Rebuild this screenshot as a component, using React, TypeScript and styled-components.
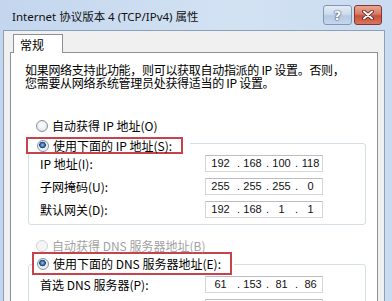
import { createGlobalStyle, styled } from "styled-components"

type Octets = [string, string, string, string]

const ipFields: { label: string; value: Octets }[] = [
  { label: "IP 地址(I):", value: ["192", "168", "100", "118"] },
  { label: "子网掩码(U):", value: ["255", "255", "255", "0"] },
  { label: "默认网关(D):", value: ["192", "168", "1", "1"] },
]

const dnsFields: { label: string; value: Octets }[] = [
  { label: "首选 DNS 服务器(P):", value: ["61", "153", "81", "86"] },
  { label: "备用 DNS 服务器(A):", value: ["", "", "", ""] },
]

const IpInput = ({ value }: { value: Octets }) => (
  <IpBox>
    {value.map((octet, i) => (
      <Octet key={i}>
        {i > 0 && <Dot>.</Dot>}
        <OctetText>{octet}</OctetText>
      </Octet>
    ))}
  </IpBox>
)

const App = () => {
  return (
    <>
      <GlobalStyle />
      <Window>
        <TitleBar>
          <Title>Internet 协议版本 4 (TCP/IPv4) 属性</Title>
          <CaptionButtons>
            <CaptionButton $variant="help">?</CaptionButton>
            <CaptionButton $variant="close">
              <svg width="12" height="10" viewBox="0 0 12 10">
                <path d="M2 1.5 L10 8.5 M10 1.5 L2 8.5" stroke="#5a1810" strokeWidth="3.6" strokeLinecap="round" />
                <path d="M2 1.5 L10 8.5 M10 1.5 L2 8.5" stroke="#fff" strokeWidth="2" strokeLinecap="round" />
              </svg>
            </CaptionButton>
          </CaptionButtons>
        </TitleBar>
        <Body>
          <TabStrip>
            <Tab>常规</Tab>
          </TabStrip>
          <Panel>
            <Description>
              如果网络支持此功能，则可以获取自动指派的 IP 设置。否则，
              <br />
              您需要从网络系统管理员处获得适当的 IP 设置。
            </Description>

            <OptionRow $disabled={false}>
              <Radio />
              <span>自动获得 IP 地址(O)</span>
            </OptionRow>

            <LegendRow $left={15} $top={3} $tail={7}>
              <Marked $height={17} $padLeft={9} $padRight={9}>
                <Radio $checked />
                <span>使用下面的 IP 地址(S):</span>
              </Marked>
            </LegendRow>
            <GroupBox>
              {ipFields.map((field) => (
                <FieldRow key={field.label}>
                  <FieldLabel>{field.label}</FieldLabel>
                  <IpInput value={field.value} />
                </FieldRow>
              ))}
            </GroupBox>

            <OptionRow $disabled>
              <Radio $disabled />
              <span>自动获得 DNS 服务器地址(B)</span>
            </OptionRow>

            <LegendRow $left={21} $top={-2} $tail={2}>
              <Marked $height={23} $padLeft={3} $padRight={9}>
                <Radio $checked />
                <span>使用下面的 DNS 服务器地址(E):</span>
              </Marked>
            </LegendRow>
            <GroupBox>
              {dnsFields.map((field) => (
                <FieldRow key={field.label}>
                  <FieldLabel>{field.label}</FieldLabel>
                  <IpInput value={field.value} />
                </FieldRow>
              ))}
            </GroupBox>
          </Panel>
        </Body>
      </Window>
    </>
  )
}

const GlobalStyle = createGlobalStyle`
  html, body {
    margin: 0;
    padding: 0;
    background: #c5d8ef;
  }
  body {
    font-family: "Noto Sans CJK SC", "Noto Sans", sans-serif;
    font-size: 12px;
    color: #000;
  }
`

const Window = styled.div`
  width: 392px;
  height: 301px;
  overflow: hidden;
  display: flex;
  flex-direction: column;
  background: linear-gradient(90deg, #c3d6ee 0%, #d3e2f3 60%, #c9dbf0 100%);
`

const TitleBar = styled.div`
  height: 30px;
  flex: none;
  display: flex;
  align-items: flex-start;
  padding: 0 10px 0 12px;
  box-sizing: border-box;
`

const Title = styled.div`
  flex: 1;
  font-family: "Noto Sans", "Noto Sans CJK SC", sans-serif;
  font-size: 11.5px;
  line-height: 16px;
  margin-top: 9px;
  color: #111;
  white-space: nowrap;
`

const CaptionButtons = styled.div`
  display: flex;
  gap: 2px;
  margin-top: 5px;
`

const CaptionButton = styled.div<{ $variant: "help" | "close" }>`
  width: ${({ $variant }) => ($variant === "help" ? "29px" : "28px")};
  height: 20px;
  box-sizing: border-box;
  border-radius: 3px;
  display: flex;
  align-items: center;
  justify-content: center;
  font-family: "DejaVu Sans", sans-serif;
  font-weight: bold;
  font-size: 13px;
  color: #fff;
  text-shadow: 0 0 2px #2b3f5c, 0 0 1px #2b3f5c;
  border: 1px solid ${({ $variant }) => ($variant === "help" ? "#7f97b8" : "#8a3327")};
  background: ${({ $variant }) =>
    $variant === "help"
      ? "linear-gradient(#e4ecf6 0%, #cddbec 45%, #b5c9e2 55%, #c6d7ec 100%)"
      : "linear-gradient(#e8a796 0%, #d77a66 45%, #c5503b 55%, #d8765f 100%)"};
`

const Body = styled.div`
  flex: 1;
  margin: 0 7px 0 3px;
  border: 1px solid #8ba0bb;
  border-bottom: none;
  background: #f0f0f0;
  padding: 3px 6px 0 6px;
  display: flex;
  flex-direction: column;
  overflow: hidden;
`

const TabStrip = styled.div`
  display: flex;
  padding-left: 3px;
`

const Tab = styled.div`
  position: relative;
  z-index: 1;
  width: 50px;
  height: 19px;
  box-sizing: border-box;
  margin-bottom: -1px;
  padding-left: 6px;
  border: 1px solid #8e8f94;
  border-bottom: none;
  background: #fff;
  line-height: 19px;
`

const Panel = styled.div`
  flex: 1;
  border: 1px solid #8e8f94;
  border-bottom: none;
  background: #fff;
  display: flex;
  flex-direction: column;
  align-items: flex-start;
`

const Description = styled.p`
  margin: 10px 0 0 14px;
  line-height: 13px;
  letter-spacing: -0.3px;
  white-space: nowrap;
`

const OptionRow = styled.div<{ $disabled: boolean }>`
  position: relative;
  z-index: 2;
  margin: ${({ $disabled }) => ($disabled ? "12px" : "28px")} 0 0 25px;
  height: 17px;
  display: flex;
  align-items: center;
  gap: 4px;
  color: ${({ $disabled }) => ($disabled ? "#a2a2a2" : "#000")};
  white-space: nowrap;
`

const Radio = styled.span<{ $checked?: boolean; $disabled?: boolean }>`
  flex: none;
  width: 12px;
  height: 12px;
  box-sizing: border-box;
  border-radius: 50%;
  border: 1px solid ${({ $disabled }) => ($disabled ? "#cfd2d6" : "#8592a2")};
  background: ${({ $checked, $disabled }) =>
    $checked
      ? "radial-gradient(circle at 45% 40%, #9fc3ea 0, #3a6ea8 2px, #163f70 3px, #e6ebf1 3.6px, #f4f6f8 100%)"
      : $disabled
        ? "#f5f5f5"
        : "radial-gradient(circle at 50% 40%, #ffffff 0, #e9ecef 60%, #d6dbe1 100%)"};
`

const LegendRow = styled.div<{ $left: number; $top: number; $tail: number }>`
  position: relative;
  z-index: 1;
  margin: ${({ $top }) => $top}px 0 0 ${({ $left }) => $left}px;
  padding-right: ${({ $tail }) => $tail}px;
  background: #fff;
`

const Marked = styled.div<{ $height: number; $padLeft: number; $padRight: number }>`
  height: ${({ $height }) => $height}px;
  box-sizing: border-box;
  border: 2px solid #c6434b;
  padding: 0 ${({ $padRight }) => $padRight}px 0 ${({ $padLeft }) => $padLeft}px;
  display: flex;
  align-items: center;
  gap: 4px;
  white-space: nowrap;
`

const GroupBox = styled.div`
  margin: -11px 0 0 17px;
  width: 338px;
  box-sizing: border-box;
  border: 1px solid #d5dfe5;
  border-radius: 3px;
  padding: 11px 0 6px 11px;
  display: flex;
  flex-direction: column;
  gap: 6px;
`

const FieldRow = styled.div`
  display: grid;
  grid-template-columns: 165px 118px;
  align-items: center;
  height: 17px;
`

const FieldLabel = styled.span`
  line-height: 17px;
  white-space: nowrap;
`

const IpBox = styled.div`
  display: flex;
  width: 118px;
  height: 17px;
  box-sizing: border-box;
  border: 1px solid #d3d6db;
  border-top-color: #b9bdc4;
  background: #fff;
  font-family: "Liberation Sans", Arial, sans-serif;
  font-size: 11px;
  line-height: 15px;
  color: #111;
`

const Octet = styled.span`
  flex: none;
  width: 29px;
  display: flex;
`

const Dot = styled.span`
  flex: none;
  width: 6px;
  padding-left: 2px;
  box-sizing: border-box;
`

const OctetText = styled.span`
  flex: 1;
  text-align: center;
`

export default App
